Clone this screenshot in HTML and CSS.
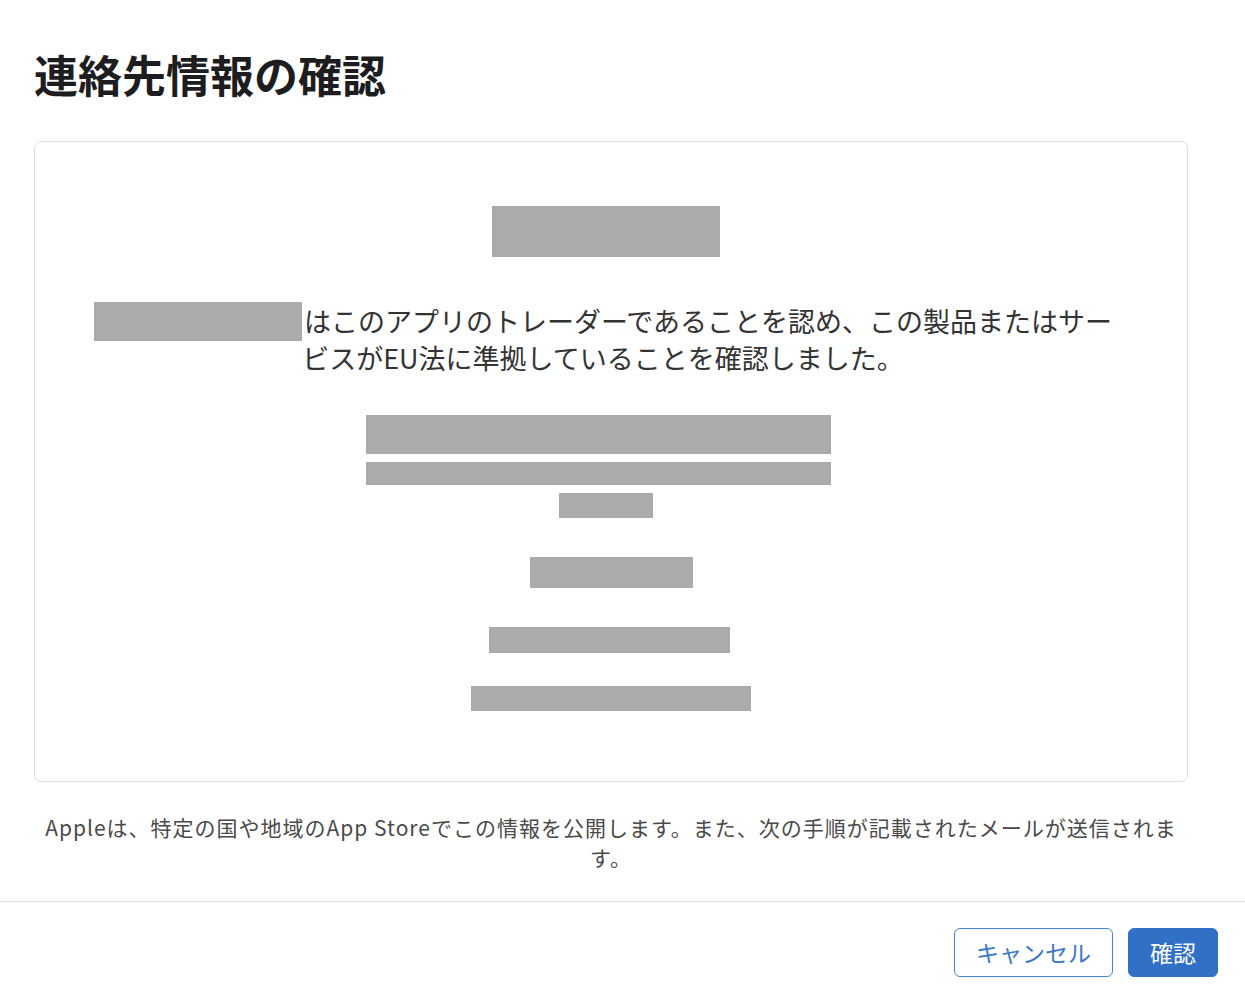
FILE: index.html
```html
<!DOCTYPE html>
<html lang="ja">
<head>
<meta charset="utf-8">
<title>連絡先情報の確認</title>
<link rel="stylesheet" href="styles.css">
</head>
<body>
<div class="dialog">
  <div class="content">
    <h1 class="title">連絡先情報の確認</h1>
    <div class="card">
      <div class="redact r-name"></div>
      <p class="statement"><span class="redact-inline"></span>はこのアプリのトレーダーであることを認め、この製品またはサービスがEU法に準拠していることを確認しました。</p>
      <div class="address">
        <div class="redact r-addr1"></div>
        <div class="redact r-addr2"></div>
        <div class="redact r-addr3"></div>
      </div>
      <div class="redact r-phone"></div>
      <div class="redact r-email"></div>
      <div class="redact r-extra"></div>
    </div>
    <p class="note">Appleは、特定の国や地域のApp Storeでこの情報を公開します。また、次の手順が記載されたメールが送信されます。</p>
  </div>
  <div class="footer">
    <button class="btn btn-secondary" type="button">キャンセル</button>
    <button class="btn btn-primary" type="button">確認</button>
  </div>
</div>
</body>
</html>
```

FILE: styles.css
```css
html, body {
  margin: 0;
  padding: 0;
  background: #ffffff;
}

body {
  font-family: "Noto Sans CJK JP", "Noto Sans", "Liberation Sans", sans-serif;
  color: #333333;
}

.dialog {
  width: 1245px;
}

.content {
  padding: 50px 0 0 34px;
}

.title {
  margin: 0;
  font-size: 44px;
  line-height: 48px;
  font-weight: 700;
  color: #1d1d1f;
}

.card {
  box-sizing: border-box;
  width: 1154px;
  margin-top: 43px;
  border: 1px solid #e0e0e0;
  border-radius: 7px;
  padding: 64px 0 70px;
  display: flex;
  flex-direction: column;
  align-items: center;
}

.redact {
  background: #ababab;
}

.r-name {
  width: 228px;
  height: 51px;
  margin-right: 10px;
}

.statement {
  margin: 45px 16px 0 0;
  width: 1040px;
  text-align: center;
  font-size: 27px;
  line-height: 37px;
  color: #333333;
}

.redact-inline {
  display: inline-block;
  width: 208px;
  height: 39px;
  background: #ababab;
    vertical-align: top;
  margin-bottom: -2px;
  margin-right: 2px;
}

.address {
  margin-top: 39px;
  display: flex;
  flex-direction: column;
  align-items: center;
  gap: 8px;
  margin-right: 25px;
}

.r-addr1 {
  width: 465px;
  height: 39px;
}

.r-addr2 {
  width: 465px;
  height: 23px;
}

.r-addr3 {
  width: 94px;
  height: 25px;
  margin-left: 14px;
}

.r-phone {
  width: 163px;
  height: 31px;
  margin-top: 39px;
}

.r-email {
  width: 241px;
  height: 26px;
  margin-top: 39px;
  margin-right: 3px;
}

.r-extra {
  width: 280px;
  height: 25px;
  margin-top: 33px;
}

.note {
  box-sizing: border-box;
  width: 1154px;
  margin: 30px 0 0;
  padding: 0 9px;
  text-align: center;
  font-size: 21px;
  line-height: 30px;
  letter-spacing: 1px;
  color: #4a4a4a;
}

.footer {
  margin-top: 29px;
  border-top: 1px solid #dcdcdc;
  padding: 26px 27px 0 0;
  display: flex;
  justify-content: flex-end;
  gap: 15px;
}

.btn {
  box-sizing: border-box;
  height: 49px;
  border-radius: 6px;
  font-family: "Noto Sans CJK JP", "Noto Sans", sans-serif;
  font-size: 23px;
  line-height: 1;
  padding: 0;
  cursor: pointer;
}

.btn-secondary {
  width: 159px;
  background: #ffffff;
  border: 1px solid #4a85d0;
  color: #3a78c8;
}

.btn-primary {
  width: 90px;
  background: #3070c7;
  border: 1px solid #3070c7;
  color: #ffffff;
}
```
